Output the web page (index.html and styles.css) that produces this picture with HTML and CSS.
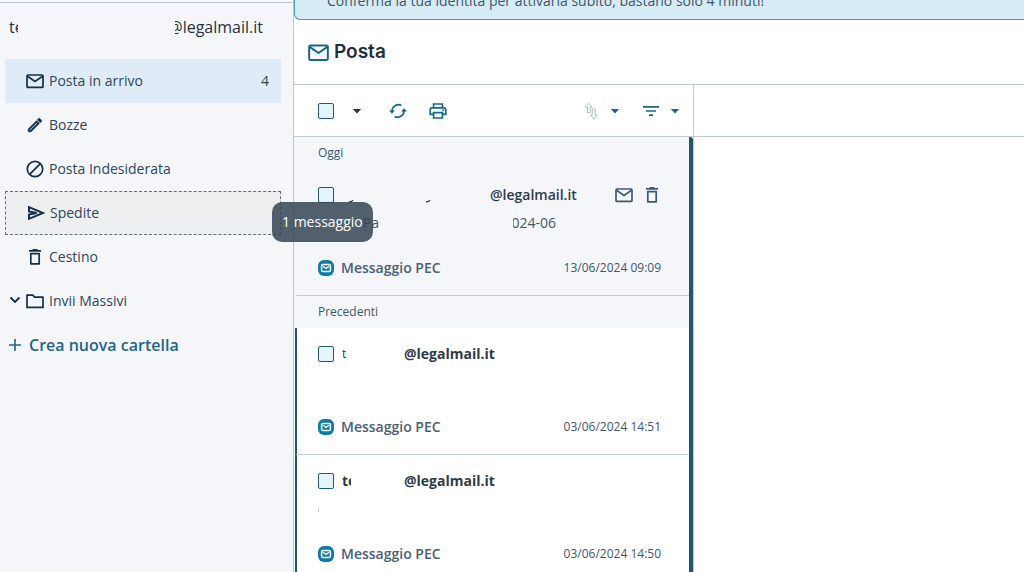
FILE: index.html
```html
<!DOCTYPE html>
<html lang="it">
<head>
    <meta charset="UTF-8">
    <meta name="viewport" content="width=device-width, initial-scale=1.0">
    <title>Posta - Legalmail</title>
    <link rel="stylesheet" href="styles.css">
</head>
<body>

    <svg class="sprite" aria-hidden="true">
        <symbol id="mail" viewBox="0 0 18 18">
            <rect x="1" y="3" width="16" height="12.4" rx="1" fill="none" stroke="currentColor" stroke-width="1.7"/>
            <path d="M1.5 4.2 9 9.4l7.5-5.2" fill="none" stroke="currentColor" stroke-width="1.7"/>
        </symbol>
        <symbol id="pencil" viewBox="0 0 24 24">
            <path d="M14.06 9.02l.92.92L5.92 19H5v-.92l9.06-9.06M17.66 3c-.25 0-.51.1-.7.29l-1.83 1.83 3.75 3.75 1.83-1.83c.39-.39.39-1.02 0-1.41l-2.34-2.34c-.2-.2-.45-.29-.71-.29zm-3.6 3.19L3 17.25V21h3.75L17.81 9.94l-3.75-3.75z" fill="currentColor" stroke="currentColor" stroke-width=".9"/>
        </symbol>
        <symbol id="block" viewBox="0 0 18 18">
            <circle cx="9" cy="9" r="7.7" fill="none" stroke="currentColor" stroke-width="1.7"/>
            <path d="M3.6 14.4 14.4 3.6" stroke="currentColor" stroke-width="1.7"/>
        </symbol>
        <symbol id="send" viewBox="0 0 18 18">
            <path d="M2 3.2 16 9 2 14.8V10.6L9.6 9 2 7.4z" fill="none" stroke="currentColor" stroke-width="2"/>
        </symbol>
        <symbol id="trash" viewBox="0 0 18 18">
            <path d="M3 2.8h12M6.6 1.9h4.8" stroke="currentColor" stroke-width="1.8"/>
            <path d="M4.8 5.6h8.4v10.2H4.8z" fill="none" stroke="currentColor" stroke-width="1.7" stroke-linejoin="round"/>
        </symbol>
        <symbol id="folder" viewBox="0 0 18 18">
            <path d="M1 3.2h5.8l1.8 1.9H17v10.3H1z" fill="none" stroke="currentColor" stroke-width="1.7" stroke-linejoin="round"/>
        </symbol>
        <symbol id="chevron" viewBox="0 0 12 12">
            <path d="M1.5 2.5 6 7l4.5-4.5" fill="none" stroke="currentColor" stroke-width="1.8"/>
        </symbol>
        <symbol id="plus" viewBox="0 0 12 12">
            <path d="M6 0v12M0 6h12" stroke="currentColor" stroke-width="1.6"/>
        </symbol>
        <symbol id="caret" viewBox="0 0 10 10">
            <path d="M.8 3h8.4L5 7.4z" fill="currentColor"/>
        </symbol>
        <symbol id="refresh" viewBox="0 0 18 18">
            <path d="M12.4 3.6A6.3 6.3 0 0 0 3 9.2M5.6 14.4A6.3 6.3 0 0 0 15 8.8" fill="none" stroke="currentColor" stroke-width="1.7"/>
            <path d="M0 8.6h6L3 11.8zM12 9.4h6L15 6.2z" fill="currentColor"/>
        </symbol>
        <symbol id="print" viewBox="0 0 18 18">
            <path d="M4.6 5.4V2h8.8v3.4M4.4 12.4H1.2V7.8q0-2 2-2h11.6q2 0 2 2v4.6h-3.2M4.6 10.6h8.8V16H4.6z" fill="none" stroke="currentColor" stroke-width="1.7"/>
            <circle cx="14.2" cy="8.2" r=".9" fill="currentColor"/>
        </symbol>
        <symbol id="sort" viewBox="0 0 18 18">
            <path d="M5.4 10.5V5H3.4l3.4-3.6L10.200 5H8.200v5.500zM10.200 7v6H8.400l3.400 3.800 3.400-3.800h-2V7z" fill="none" stroke="currentColor" stroke-width=".9"/>
        </symbol>
        <symbol id="filter" viewBox="0 0 18 18">
            <path d="M1 4.8h16M4 9h10M7 13.2h4" stroke="currentColor" stroke-width="1.7"/>
        </symbol>
        <symbol id="pec" viewBox="0 0 16 16">
            <rect width="16" height="16" rx="6" fill="#0f7ba6"/>
            <rect x="3.6" y="4.4" width="8.8" height="7.2" rx="1.4" fill="none" stroke="#fff" stroke-width="1.5"/>
            <path d="M5 6.2 8 8.4l3-2.2" fill="none" stroke="#fff" stroke-width="1.4"/>
        </symbol>
    </svg>

    <div class="app">
        <aside class="sidebar">
            <div class="account">
                <span class="clip clip-start">te</span>
                <span class="clip clip-domain">@legalmail.it</span>
            </div>
            <nav class="folders">
                <a href="#" class="folder active">
                    <svg class="icon"><use href="#mail"/></svg>
                    <span>Posta in arrivo</span>
                    <span class="count">4</span>
                </a>
                <a href="#" class="folder">
                    <svg class="icon"><use href="#pencil"/></svg>
                    <span>Bozze</span>
                </a>
                <a href="#" class="folder">
                    <svg class="icon"><use href="#block"/></svg>
                    <span>Posta Indesiderata</span>
                </a>
                <a href="#" class="folder focused">
                    <svg class="icon"><use href="#send"/></svg>
                    <span>Spedite</span>
                    <span class="tooltip" role="tooltip">1 messaggio</span>
                </a>
                <a href="#" class="folder">
                    <svg class="icon"><use href="#trash"/></svg>
                    <span>Cestino</span>
                </a>
                <a href="#" class="folder expandable">
                    <svg class="icon-small"><use href="#chevron"/></svg>
                    <svg class="icon"><use href="#folder"/></svg>
                    <span>Invii Massivi</span>
                </a>
            </nav>
            <button class="new-folder">
                <svg class="icon-small"><use href="#plus"/></svg>
                Crea nuova cartella
            </button>
        </aside>

        <main class="main">
            <div class="banner">
                <p>Conferma la tua identità per attivarla subito, bastano solo 4 minuti!</p>
            </div>
            <header class="page-header">
                <svg class="icon-title"><use href="#mail"/></svg>
                <h1>Posta</h1>
            </header>

            <div class="panes">
                <section class="list-pane">
                    <div class="toolbar">
                        <div class="tools select-tools">
                            <input type="checkbox" aria-label="Seleziona tutti">
                            <button class="dark" aria-label="Opzioni di selezione"><svg class="icon-caret"><use href="#caret"/></svg></button>
                        </div>
                        <div class="tools">
                            <button aria-label="Aggiorna"><svg class="icon"><use href="#refresh"/></svg></button>
                            <button aria-label="Stampa"><svg class="icon"><use href="#print"/></svg></button>
                        </div>
                        <div class="tools sort-tools">
                            <button aria-label="Ordina"><svg class="icon muted"><use href="#sort"/></svg><svg class="icon-caret"><use href="#caret"/></svg></button>
                            <button aria-label="Filtra"><svg class="icon"><use href="#filter"/></svg><svg class="icon-caret"><use href="#caret"/></svg></button>
                        </div>
                    </div>

                    <div class="messages">
                        <h2>Oggi</h2>
                        <article class="message read">
                            <div class="sender">
                                <input type="checkbox" aria-label="Seleziona messaggio">
                                <svg class="strokes" viewBox="0 0 86 22" aria-hidden="true">
                                    <path d="M7 18q3 0 4-2M84 18q3 0 4-2" fill="none" stroke="currentColor" stroke-width="1.4"/>
                                </svg>
                                <span class="domain">@legalmail.it</span>
                                <span class="actions">
                                    <button aria-label="Segna come non letto"><svg class="icon"><use href="#mail"/></svg></button>
                                    <button aria-label="Elimina"><svg class="icon"><use href="#trash"/></svg></button>
                                </span>
                            </div>
                            <div class="subject">
                                <span class="clip clip-subject">Pa</span>
                                <span class="clip clip-period">2024-06</span>
                            </div>
                            <div class="meta">
                                <svg class="icon-pec"><use href="#pec"/></svg>
                                <span>Messaggio PEC</span>
                                <time>13/06/2024 09:09</time>
                            </div>
                        </article>

                        <h2>Precedenti</h2>
                        <article class="message">
                            <div class="sender">
                                <input type="checkbox" aria-label="Seleziona messaggio">
                                <span class="clip clip-letter"><span>t</span></span>
                                <span class="domain">@legalmail.it</span>
                            </div>
                            <div class="subject"></div>
                            <div class="meta">
                                <svg class="icon-pec"><use href="#pec"/></svg>
                                <span>Messaggio PEC</span>
                                <time>03/06/2024 14:51</time>
                            </div>
                        </article>
                        <article class="message">
                            <div class="sender">
                                <input type="checkbox" aria-label="Seleziona messaggio">
                                <span class="clip clip-start">te</span>
                                <span class="domain">@legalmail.it</span>
                            </div>
                            <div class="subject"><i class="speck"></i></div>
                            <div class="meta">
                                <svg class="icon-pec"><use href="#pec"/></svg>
                                <span>Messaggio PEC</span>
                                <time>03/06/2024 14:50</time>
                            </div>
                        </article>
                    </div>
                </section>

                <section class="reading-pane">
                    <div class="toolbar"></div>
                </section>
            </div>
        </main>
    </div>

</body>
</html>
```
FILE: styles.css
```css
* {
    margin: 0;
    padding: 0;
    box-sizing: border-box;
}

body {
    font-family: "Open Sans", sans-serif;
    font-size: 14px;
    line-height: 22px;
    color: #3f566c;
    background: #fff;
    overflow: hidden;
}

button {
    border: none;
    background: none;
    font: inherit;
    color: inherit;
    cursor: pointer;
}

a {
    color: inherit;
    text-decoration: none;
}

svg {
    display: block;
    flex: none;
}

.sprite {
    display: none;
}

.icon {
    width: 18px;
    height: 18px;
}

.icon-small {
    width: 12px;
    height: 12px;
}

.icon-title {
    width: 21px;
    height: 21px;
    color: #14688a;
}

.icon-caret {
    width: 10px;
    height: 10px;
}

.icon-pec {
    width: 16px;
    height: 16px;
}

input[type="checkbox"] {
    appearance: none;
    flex: none;
    width: 16px;
    height: 16px;
    border: 1px solid #1f5a75;
    border-radius: 2px;
    background: #e3f4fb;
}

.app {
    display: flex;
    height: 100vh;
}

/* sidebar */
.sidebar {
    position: relative;
    z-index: 1;
    flex: none;
    width: 294px;
    padding: 2px 12px 0 5px;
    background: #f4f6fa;
    border-right: 1px solid #bcc6cf;
}

.account {
    display: flex;
    justify-content: space-between;
    margin: 0 -12px 0 -5px;
    padding: 13px 30px 21px 9px;
    border-top: 1px solid #bcc6d0;
    font-size: 16px;
    font-weight: 500;
    color: #26323f;
}

.clip {
    display: flex;
    overflow: hidden;
    white-space: nowrap;
}

.clip-start {
    width: 9px;
}

.clip-domain {
    justify-content: flex-end;
    width: 88px;
}

.folder {
    position: relative;
    display: flex;
    align-items: center;
    gap: 5px;
    height: 44px;
    padding: 0 12px 0 21px;
    color: #2f465c;
}

.folder .icon,
.folder .icon-small {
    color: #14304a;
}

.folder.active {
    background: #dfebf7;
}

.folder.focused {
    background: #edeff1;
    border: 1px dashed #60707f;
}

.folder.expandable {
    padding-left: 4px;
}

.count {
    margin-left: auto;
}

.tooltip {
    position: absolute;
    top: 10px;
    left: 266px;
    padding: 9px 10px;
    border-radius: 10px;
    background: rgba(53, 68, 83, 0.85);
    color: #fff;
    font-weight: 500;
    white-space: nowrap;
}

.new-folder {
    display: flex;
    align-items: center;
    gap: 8px;
    padding: 11px 4px;
    font-size: 16px;
    font-weight: 600;
    color: #1f6787;
}

/* main area */
.main {
    flex: 1;
    min-width: 0;
    display: flex;
    flex-direction: column;
}

.banner {
    display: flex;
    align-items: flex-end;
    height: 20px;
    padding: 0 32px 7px;
    overflow: hidden;
    border-bottom: 1px solid #4a9ab8;
    border-left: 1px solid #4a9ab8;
    border-bottom-left-radius: 6px;
    background: #d5ecf6;
}

.page-header {
    display: flex;
    align-items: center;
    gap: 5px;
    height: 65px;
    padding: 0 14px;
    border-bottom: 1px solid #c2cad3;
}

.page-header h1 {
    font-family: Inter, sans-serif;
    font-size: 19px;
    font-weight: 600;
    color: #1f2d3d;
}

.panes {
    flex: 1;
    min-height: 0;
    display: flex;
}

.list-pane {
    display: flex;
    flex-direction: column;
    flex: none;
    width: 400px;
    border-right: 1px solid #c2cad3;
}

.reading-pane {
    flex: 1;
}

.toolbar {
    display: flex;
    align-items: center;
    flex: none;
    gap: 27px;
    height: 52px;
    padding: 0 13px 0 24px;
    border-bottom: 1px solid #c2cad3;
    color: #14688a;
}

.tools {
    display: flex;
    align-items: center;
    gap: 22px;
}

.tools button {
    display: flex;
    align-items: center;
    gap: 10px;
}

.select-tools {
    gap: 18px;
}

.sort-tools {
    margin-left: auto;
}

.dark {
    color: #26323f;
}

.muted {
    color: #a3b3bf;
}

/* message list */
.messages {
    flex: 1;
    min-height: 0;
    overflow: hidden;
    border-right: 4px solid #21566b;
    border-top-right-radius: 3px;
    background: #f4f6fa;
}

.messages h2 {
    height: 32px;
    padding: 5px 24px;
    font-size: 12px;
    font-weight: 400;
}

.message {
    height: 127px;
    margin-left: 1px;
    padding: 15px 28px 0 21px;
    border-bottom: 1px solid #c2cad3;
    border-left: 2px solid #21566b;
    background: #fff;
}

.message.read {
    border-left-color: transparent;
    background: none;
}

.sender {
    display: flex;
    align-items: center;
    gap: 8px;
    font-weight: 700;
    color: #2f3a47;
}

.read .sender {
    font-weight: 600;
}

.sender .domain {
    width: 91px;
}

.sender .clip + .domain {
    margin-left: 45px;
}

.clip-letter {
    justify-content: flex-start;
    width: 9px;
    font-size: 12px;
    font-weight: 400;
}

.strokes {
    width: 86px;
    height: 22px;
    margin-right: 54px;
    overflow: visible;
}

.actions {
    display: flex;
    gap: 10px;
    margin-left: auto;
    color: #3c5a75;
}

.subject {
    display: flex;
    gap: 134px;
    height: 22px;
    margin: 6px 0 23px;
}

.clip-subject {
    justify-content: flex-end;
    width: 61px;
}

.clip-period {
    justify-content: flex-end;
    width: 43px;
}

.speck {
    width: 1px;
    height: 4px;
    margin-top: 10px;
    background: #c2cad3;
}

.meta {
    display: flex;
    align-items: center;
    gap: 7px;
    font-weight: 500;
}

.meta span {
    font-weight: 600;
    color: #4a6076;
}

.meta time {
    margin-left: auto;
    font-size: 12px;
    font-weight: 400;
}
```
